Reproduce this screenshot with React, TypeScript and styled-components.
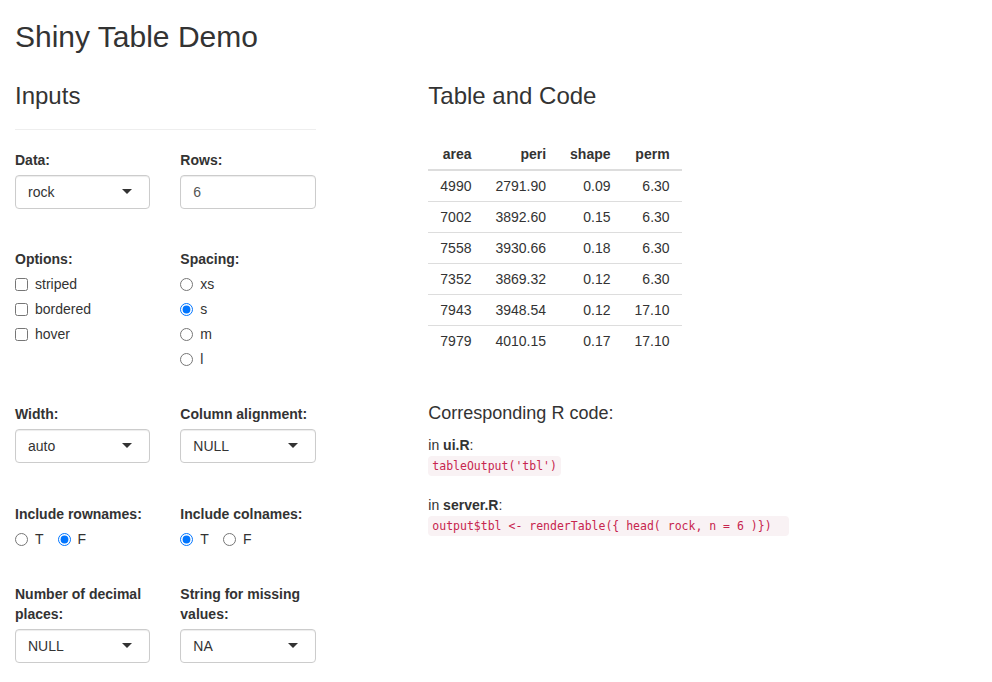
import React from "react";
import styled, { createGlobalStyle } from "styled-components";

const GlobalStyle = createGlobalStyle`
	html, body {
		margin: 0;
		padding: 0;
		overflow: hidden;
		background: #fff;
	}
	body {
		font-family: "Liberation Sans", Arial, sans-serif;
		font-size: 14px;
		line-height: 20px;
		color: #333;
	}
	* {
		box-sizing: border-box;
	}
`;

const Page = styled.div`
	padding: 0 15px;
`;

const Title = styled.h2`
	margin: 20px 0 10px;
	font-size: 30px;
	line-height: 33px;
	font-weight: 500;
`;

const Row = styled.div`
	display: flex;
	margin: 0 -15px;
`;

const Column = styled.div<{ span: number; offset?: number }>`
	width: ${({ span }) => (span / 12) * 100}%;
	margin-left: ${({ offset }) => ((offset || 0) / 12) * 100}%;
	padding: 0 15px;
`;

const SectionTitle = styled.h3`
	margin: 20px 0 10px;
	font-size: 24px;
	line-height: 26.4px;
	font-weight: 500;
`;

const Divider = styled.hr`
	margin: 20px 0;
	border: 0;
	border-top: 1px solid #eee;
`;

const FormRow = styled.div<{ after: number }>`
	display: grid;
	grid-template-columns: 1fr 1fr;
	column-gap: 30px;
	align-items: start;
	margin-bottom: ${({ after }) => after}px;
`;

const Field = styled.div`
	display: flex;
	flex-direction: column;
`;

const Label = styled.label`
	display: block;
	font-weight: bold;
	margin-bottom: 5px;
`;

const SelectBox = styled.div`
	display: flex;
	align-items: center;
	justify-content: space-between;
	height: 34px;
	padding: 6px 17px 6px 12px;
	border: 1px solid #ccc;
	border-radius: 4px;
	box-shadow: inset 0 1px 1px rgba(0, 0, 0, 0.075);
	background: #fff;
	color: #333;
`;

const Caret = styled.span`
	width: 0;
	height: 0;
	border-style: solid;
	border-width: 5px 5px 0 5px;
	border-color: #333 transparent transparent transparent;
	margin-top: -2px;
`;

const NumberBox = styled.div`
	height: 34px;
	padding: 6px 12px;
	border: 1px solid #ccc;
	border-radius: 4px;
	box-shadow: inset 0 1px 1px rgba(0, 0, 0, 0.075);
	color: #555;
`;

const OptionList = styled.div<{ inline?: boolean }>`
	display: flex;
	flex-direction: ${({ inline }) => (inline ? "row" : "column")};
	gap: ${({ inline }) => (inline ? "14px" : "5px")};
`;

const Option = styled.label`
	display: flex;
	align-items: center;
	gap: 7px;
	height: 20px;
	font-weight: normal;

	input {
		width: 13px;
		height: 13px;
		margin: 0;
		flex: none;
	}
`;

const Table = styled.table`
	border-collapse: collapse;
	border-spacing: 0;
	margin-top: 30px;
`;

const Th = styled.th`
	text-align: right;
	padding: 5px 12px;
	font-weight: bold;
	border-bottom: 2px solid #ddd;
	line-height: 20px;
`;

const Td = styled.td`
	text-align: right;
	padding: 5px 12px;
	border-top: 1px solid #ddd;
	line-height: 20px;
`;

const SubTitle = styled.h4`
	margin: 48px 0 11px;
	font-size: 18px;
	line-height: 19.8px;
	font-weight: 500;
`;

const CodeSection = styled.div<{ after: number }>`
	margin-bottom: ${({ after }) => after}px;
`;

const Code = styled.code`
	font-family: "DejaVu Sans Mono", "Liberation Mono", monospace;
	font-size: 11.5px;
	padding: 3px 4px;
	color: #c7254e;
	background-color: #f9f2f4;
	border-radius: 4px;
	white-space: pre;
`;

function Select({ value }: { value: string }) {
	return (
		<SelectBox>
			<span>{value}</span>
			<Caret />
		</SelectBox>
	);
}

function Choices({
	name,
	type,
	options,
	checked,
	inline,
}: {
	name: string;
	type: "checkbox" | "radio";
	options: string[];
	checked?: string;
	inline?: boolean;
}) {
	return (
		<OptionList inline={inline}>
			{options.map((o) => (
				<Option key={o}>
					<input type={type} name={name} defaultChecked={o === checked} />
					<span>{o}</span>
				</Option>
			))}
		</OptionList>
	);
}

const ROWS = [
	["4990", "2791.90", "0.09", "6.30"],
	["7002", "3892.60", "0.15", "6.30"],
	["7558", "3930.66", "0.18", "6.30"],
	["7352", "3869.32", "0.12", "6.30"],
	["7943", "3948.54", "0.12", "17.10"],
	["7979", "4010.15", "0.17", "17.10"],
];

export default function App() {
	return (
		<Page>
			<GlobalStyle />
			<Title>Shiny Table Demo</Title>
			<Row>
				<Column span={4}>
					<SectionTitle>Inputs</SectionTitle>
					<Divider />
					<FormRow after={40}>
						<Field>
							<Label>Data:</Label>
							<Select value="rock" />
						</Field>
						<Field>
							<Label>Rows:</Label>
							<NumberBox>6</NumberBox>
						</Field>
					</FormRow>
					<FormRow after={35}>
						<Field>
							<Label>Options:</Label>
							<Choices name="opts" type="checkbox" options={["striped", "bordered", "hover"]} />
						</Field>
						<Field>
							<Label>Spacing:</Label>
							<Choices name="spacing" type="radio" options={["xs", "s", "m", "l"]} checked="s" />
						</Field>
					</FormRow>
					<FormRow after={41}>
						<Field>
							<Label>Width:</Label>
							<Select value="auto" />
						</Field>
						<Field>
							<Label>Column alignment:</Label>
							<Select value="NULL" />
						</Field>
					</FormRow>
					<FormRow after={35}>
						<Field>
							<Label>Include rownames:</Label>
							<Choices name="rownames" type="radio" options={["T", "F"]} checked="F" inline />
						</Field>
						<Field>
							<Label>Include colnames:</Label>
							<Choices name="colnames" type="radio" options={["T", "F"]} checked="T" inline />
						</Field>
					</FormRow>
					<FormRow after={0}>
						<Field>
							<Label>Number of decimal places:</Label>
							<Select value="NULL" />
						</Field>
						<Field>
							<Label>String for missing values:</Label>
							<Select value="NA" />
						</Field>
					</FormRow>
				</Column>
				<Column span={7} offset={1}>
					<SectionTitle>Table and Code</SectionTitle>
					<Table>
						<thead>
							<tr>
								<Th>area</Th>
								<Th>peri</Th>
								<Th>shape</Th>
								<Th>perm</Th>
							</tr>
						</thead>
						<tbody>
							{ROWS.map((r, i) => (
								<tr key={i}>
									{r.map((c, j) => (
										<Td key={j}>{c}</Td>
									))}
								</tr>
							))}
						</tbody>
					</Table>
					<SubTitle>Corresponding R code:</SubTitle>
					<CodeSection after={19}>
						<div>
							in <strong>ui.R</strong>:
						</div>
						<div>
							<Code>tableOutput('tbl')</Code>
						</div>
					</CodeSection>
					<CodeSection after={0}>
						<div>
							in <strong>server.R</strong>:
						</div>
						<div>
							<Code>{"output$tbl <- renderTable({ head( rock, n = 6 )})  "}</Code>
						</div>
					</CodeSection>
				</Column>
			</Row>
		</Page>
	);
}
